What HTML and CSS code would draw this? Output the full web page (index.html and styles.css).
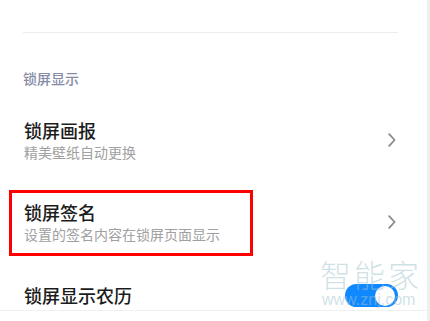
FILE: index.html
```html
<!DOCTYPE html>
<html lang="zh-CN">
<head>
<meta charset="utf-8">
<link rel="stylesheet" href="styles.css">
</head>
<body>
<div class="page">
  <main class="content">
    <div class="top-space"></div>
    <div class="divider"></div>
    <div class="section-title">锁屏显示</div>
    <div class="row">
      <div class="text">
        <div class="title">锁屏画报</div>
        <div class="sub">精美壁纸自动更换</div>
      </div>
      <svg class="chev" width="8" height="14" viewBox="0 0 8 14"><path d="M1.2 1.2 L6.6 7 L1.2 12.8" fill="none" stroke="#8a8a8a" stroke-width="1.8" stroke-linecap="round" stroke-linejoin="round"/></svg>
    </div>
    <div class="row">
      <div class="text marked">
        <div class="title">锁屏签名</div>
        <div class="sub">设置的签名内容在锁屏页面显示</div>
      </div>
      <svg class="chev" width="8" height="14" viewBox="0 0 8 14"><path d="M1.2 1.2 L6.6 7 L1.2 12.8" fill="none" stroke="#8a8a8a" stroke-width="1.8" stroke-linecap="round" stroke-linejoin="round"/></svg>
    </div>
    <div class="row row-last">
      <div class="text">
        <div class="title">锁屏显示农历</div>
      </div>
      <div class="toggle"><div class="knob"></div></div>
    </div>
    <div class="bottom-line"></div>
    <div class="watermark">
      <div class="wm-cn">智能家</div>
      <div class="wm-en">www.znj.com</div>
    </div>
  </main>
  <div class="scrollbar"></div>
</div>
</body>
</html>
```
FILE: styles.css
```css
html, body {
  margin: 0;
  padding: 0;
  background: #ffffff;
}
body {
  font-family: "Noto Sans CJK SC", "Noto Sans", sans-serif;
  width: 430px;
  height: 321px;
  overflow: hidden;
}
.page {
  display: flex;
  width: 430px;
  height: 321px;
}
.content {
  position: relative;
  width: 427px;
  flex: 0 0 427px;
}
.scrollbar {
  flex: 0 0 3px;
  background: #efefef;
}
.top-space {
  height: 32px;
}
.divider {
  height: 1px;
  margin: 0 29px 0 23px;
  background: #ececec;
}
.section-title {
  margin-top: 35px;
  padding-left: 23px;
  font-size: 14px;
  line-height: 21px;
  font-weight: 500;
  color: #868ca6;
}
.row {
  display: flex;
  align-items: center;
  justify-content: space-between;
  padding: 19px 30px 19px 24px;
  margin-top: 10px;
}
.row + .row {
  margin-top: 0;
}
.row-last {
  padding-top: 20px;
  padding-bottom: 3px;
}
.text {
  position: relative;
}
.title {
  font-size: 18px;
  line-height: 24px;
  font-weight: 500;
  color: #1c1c1c;
}
.sub {
  font-size: 14px;
  line-height: 20px;
  color: #a0a0a0;
}
.marked::after {
  content: "";
  position: absolute;
  left: -15px;
  top: -10px;
  width: 238px;
  height: 60px;
  border: 3px solid #ff0000;
}
.chev {
  display: block;
  margin-right: 1px;
}
.toggle {
  position: relative;
  width: 53px;
  height: 23px;
  border-radius: 12px;
  background: #1088ff;
  margin-right: -1px;
  margin-top: 1px;
}
.knob {
  position: absolute;
  right: 3px;
  top: 1.5px;
  width: 20px;
  height: 20px;
  border-radius: 50%;
  background: #ffffff;
}
.bottom-line {
  height: 1px;
  background: #f0f0f0;
}
.watermark {
  position: absolute;
  left: 320px;
  top: 255px;
  color: rgba(160, 196, 206, 0.5);
  pointer-events: none;
}
.wm-cn {
  font-size: 31px;
  line-height: 38px;
  letter-spacing: 3px;
  font-weight: 300;
}
.wm-en {
  font-family: "Liberation Sans", Arial, sans-serif;
  font-size: 16px;
  line-height: 16px;
  margin-top: -1px;
  padding-left: 2px;
}
```
